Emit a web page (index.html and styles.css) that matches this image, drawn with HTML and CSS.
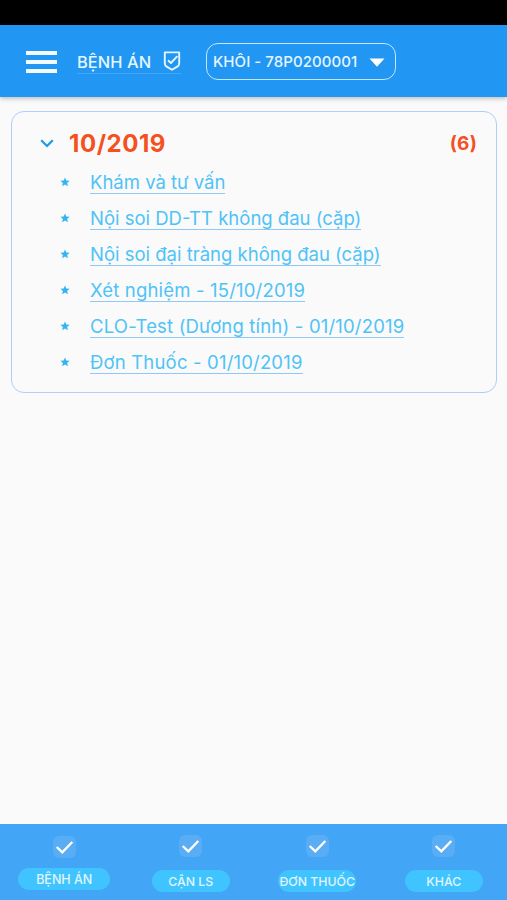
FILE: index.html
```html
<!DOCTYPE html>
<html lang="vi">
<head>
<meta charset="utf-8">
<title>Bệnh án</title>
<link rel="stylesheet" href="styles.css">
</head>
<body>
<div class="status"></div>
<header class="header">
  <div class="menu"><i></i><i></i><i></i></div>
  <div class="title"><span>BỆNH ÁN</span>
    <svg class="shield" viewBox="0 0 18 20" fill="none" stroke="currentColor" stroke-width="1.9" stroke-linejoin="round"><path d="M1.8 1.4H16.2V12.2Q16.2 14.4 14.3 15.6L9 18.8 3.7 15.6Q1.8 14.4 1.8 12.2Z"/><path d="M5 9.2 7.9 12 14.4 5.2"/></svg>
  </div>
  <div class="patient"><span>KHÔI - 78P0200001</span><svg class="caret" viewBox="0 0 16 9"><path d="M0.5 0.5H15.5L8 8.8Z" fill="#fff"/></svg></div>
</header>
<main class="main">
  <section class="card">
    <div class="card-head">
      <svg class="chev" viewBox="0 0 14 9" fill="none" stroke="#1f9be6" stroke-width="2.3"><path d="M1.2 1.3 7 7 12.8 1.3"/></svg>
      <h1>10/2019</h1>
      <b class="count">(6)</b>
    </div>
    <ul class="list">
      <li><svg class="star" viewBox="0 0 10 10"><path d="M5 .5 6.3 3.6 9.6 3.8 7.1 6 7.9 9.3 5 7.5 2.1 9.3 2.9 6 .4 3.8 3.7 3.6Z"/></svg><a>Khám và tư vấn</a></li>
      <li><svg class="star" viewBox="0 0 10 10"><path d="M5 .5 6.3 3.6 9.6 3.8 7.1 6 7.9 9.3 5 7.5 2.1 9.3 2.9 6 .4 3.8 3.7 3.6Z"/></svg><a>Nội soi DD-TT không đau (cặp)</a></li>
      <li><svg class="star" viewBox="0 0 10 10"><path d="M5 .5 6.3 3.6 9.6 3.8 7.1 6 7.9 9.3 5 7.5 2.1 9.3 2.9 6 .4 3.8 3.7 3.6Z"/></svg><a>Nội soi đại tràng không đau (cặp)</a></li>
      <li><svg class="star" viewBox="0 0 10 10"><path d="M5 .5 6.3 3.6 9.6 3.8 7.1 6 7.9 9.3 5 7.5 2.1 9.3 2.9 6 .4 3.8 3.7 3.6Z"/></svg><a class="dated">Xét nghiệm - 15/10/2019</a></li>
      <li><svg class="star" viewBox="0 0 10 10"><path d="M5 .5 6.3 3.6 9.6 3.8 7.1 6 7.9 9.3 5 7.5 2.1 9.3 2.9 6 .4 3.8 3.7 3.6Z"/></svg><a class="dated">CLO-Test (Dương tính) - 01/10/2019</a></li>
      <li><svg class="star" viewBox="0 0 10 10"><path d="M5 .5 6.3 3.6 9.6 3.8 7.1 6 7.9 9.3 5 7.5 2.1 9.3 2.9 6 .4 3.8 3.7 3.6Z"/></svg><a class="dated">Đơn Thuốc - 01/10/2019</a></li>
    </ul>
  </section>
</main>
<nav class="tabs">
  <div class="tab active"><svg class="tick" viewBox="0 0 23 22"><path d="M3.7 11 9.3 16.3 19.3 6"/></svg><span>BỆNH ÁN</span></div>
  <div class="tab"><svg class="tick" viewBox="0 0 23 22"><path d="M3.7 11 9.3 16.3 19.3 6"/></svg><span>CẬN LS</span></div>
  <div class="tab"><svg class="tick" viewBox="0 0 23 22"><path d="M3.7 11 9.3 16.3 19.3 6"/></svg><span>ĐƠN THUỐC</span></div>
  <div class="tab"><svg class="tick" viewBox="0 0 23 22"><path d="M3.7 11 9.3 16.3 19.3 6"/></svg><span>KHÁC</span></div>
</nav>
</body>
</html>
```
FILE: styles.css
```css
* { box-sizing: border-box; }
body {
  margin: 0;
  height: 900px;
  display: flex;
  flex-direction: column;
  background: #fafafa;
  font-family: Inter, sans-serif;
  overflow: hidden;
}
svg { display: block; flex: none; }
.status { height: 25px; background: #000; flex: none; }
.header {
  height: 72px;
  flex: none;
  display: flex;
  align-items: flex-start;
  background: #2196f3;
  color: #e4f6ff;
  padding-left: 26px;
  box-shadow: 0 1px 5px rgba(0, 0, 0, .3);
}
.menu { width: 31px; margin-top: 26px; display: grid; gap: 5px; }
.menu i { height: 4px; background: #f2fbff; }
.title {
  margin: 24px 0 0 20px;
  width: 104px;
  height: 25px;
  display: flex;
  border-bottom: 1px solid #42a5f5;
  font-size: 16.4px;
  font-weight: 500;
  line-height: 26px;
  letter-spacing: .1px;
  white-space: nowrap;
}
.shield { width: 18px; height: 20px; margin: 2px 0 0 auto; }
.patient {
  width: 190px;
  height: 37px;
  margin: 18px 0 0 25px;
  padding-left: 6px;
  border: 1px solid #c2e8ff;
  border-radius: 12px;
  display: flex;
  align-items: center;
  font-size: 15px;
  font-weight: 500;
  letter-spacing: .05px;
  white-space: nowrap;
}
.caret { width: 16px; height: 9px; margin: 1px 10px 0 auto; }
.main { flex: 1; padding: 14px 10px 0 11px; }
.card {
  height: 282px;
  border: 1px solid #b0cdfb;
  border-radius: 13px;
}
.card-head {
  height: 52px;
  display: flex;
  align-items: center;
  padding: 11px 19px 0 28px;
  color: #f4511e;
}
.chev { width: 14px; height: 9px; }
.card-head h1 {
  margin: 0 0 0 15px;
  font-size: 24px;
  line-height: 30px;
  font-weight: 700;
  letter-spacing: .55px;
}
.count { margin-left: auto; font-size: 19px; letter-spacing: .2px; }
.list { list-style: none; margin: 0; padding: 5px 0 0 48px; }
.list li { height: 36.1px; display: flex; align-items: flex-start; }
.star { width: 10px; height: 10px; margin: 8px 20px 0 0; fill: #34b3f1; }
.list a {
  height: 25px;
  line-height: 27px;
  font-size: 18.5px;
  color: #4fc3f7;
  border-bottom: 1px solid #90c8f8;
  white-space: nowrap;
}
.list .dated { letter-spacing: .18px; }
.tabs {
  height: 76px;
  flex: none;
  display: grid;
  grid-template-columns: repeat(4, 126.5px);
  background: #42a5f5;
}
.tab { display: flex; flex-direction: column; align-items: center; padding: 11px 0 0 2px; }
.tick {
  width: 23px;
  height: 22px;
  border-radius: 6px;
  background: #58adf5;
  fill: none;
  stroke: #fff;
  stroke-width: 2.4;
}
.tab span {
  width: 78px;
  height: 22px;
  margin-top: 13px;
  border-radius: 11px;
  background: #40c4ff;
  color: #e1f5fe;
  font-size: 12.3px;
  font-weight: 500;
  line-height: 23px;
  text-align: center;
  white-space: nowrap;
}
.tab.active { padding-top: 12px; }
.tab.active span { width: 92px; margin-top: 10px; font-size: 12.5px; line-height: 24px; }
```
